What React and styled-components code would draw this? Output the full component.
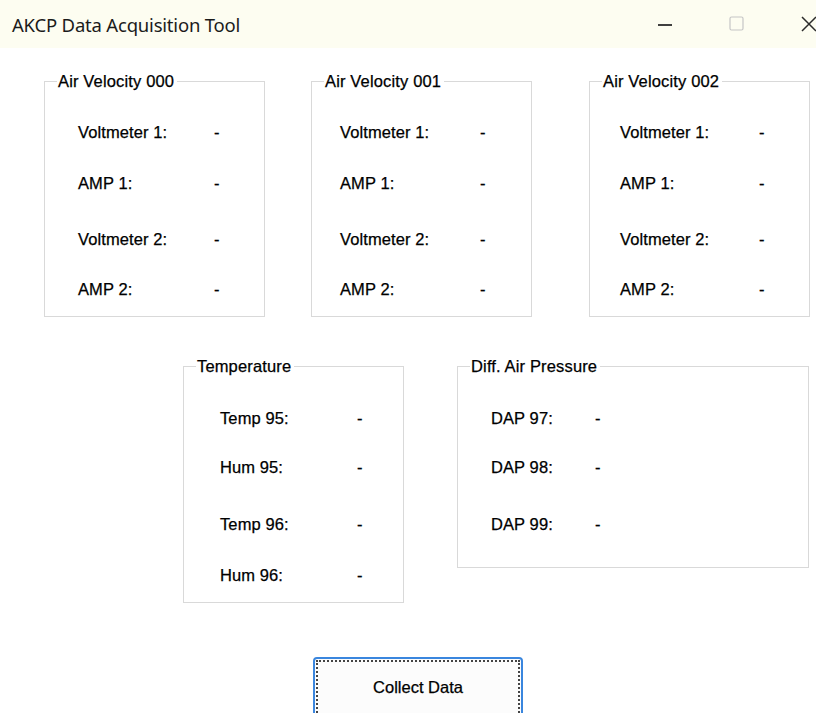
import React from 'react';
import styled, { createGlobalStyle } from 'styled-components';

const GlobalStyle = createGlobalStyle`
    html, body {
        margin: 0;
        padding: 0;
        background: #fff;
    }
    body {
        width: 816px;
        height: 713px;
        overflow: hidden;
    }
`;

const StyledWindow = styled.div`
    width: 816px;
    height: 713px;
    overflow: hidden;
    background: #fff;
    font-family: "Liberation Sans", Arial, sans-serif;
    color: #000;
`;
const StyledTitleBar = styled.div`
    display: flex;
    align-items: center;
    justify-content: space-between;
    height: 48px;
    padding-left: 12px;
    background: #fdfdf1;
`;
const StyledTitle = styled.span`
    font-family: "Noto Sans", "Open Sans", sans-serif;
    font-size: 18.5px;
    letter-spacing: -0.2px;
    color: #1b1b1b;
    margin-top: 1px;
`;
const StyledControls = styled.div`
    display: flex;
    align-items: center;
    height: 100%;
`;
const StyledControl = styled.div`
    display: flex;
    align-items: center;
    justify-content: center;
    width: 72px;
    height: 100%;
    margin-right: ${props => props.$edge ? '-29px' : '0'};
`;
const StyledBody = styled.div`
    display: flex;
    flex-direction: column;
`;
const StyledGroupRow = styled.div`
    display: flex;
    align-items: flex-start;
    margin-top: ${props => props.$top}px;
`;
const StyledGroup = styled.fieldset`
    box-sizing: border-box;
    width: ${props => props.$width}px;
    margin: 0 0 0 ${props => props.$left}px;
    padding: 0 0 ${props => props.$bottom}px ${props => props.$inset}px;
    border: 1px solid #d9d9d9;
    min-width: 0;
`;
const StyledLegend = styled.legend`
    margin-left: ${props => props.$shift}px;
    padding: 0 3px 0 1px;
    font-size: 16.5px;
    line-height: 18px;
    letter-spacing: 0.15px;
    -webkit-text-stroke: 0.25px #000;
`;
const StyledRow = styled.div`
    display: grid;
    grid-template-columns: ${props => props.$label}px auto;
    align-items: center;
    height: 20px;
    margin-top: ${props => props.$top}px;
    font-size: 16.5px;
    letter-spacing: 0.1px;
    -webkit-text-stroke: 0.25px #000;
`;
const StyledButtonRow = styled.div`
    display: flex;
    margin-top: 54px;
    padding-left: 313px;
`;
const StyledButton = styled.button`
    box-sizing: border-box;
    width: 210px;
    height: 62px;
    padding: 1px;
    border: 2px solid #3a86de;
    border-radius: 4px;
    background: #fcfcfc;
    font-family: "Liberation Sans", Arial, sans-serif;
    font-size: 16.5px;
    color: #000;
    -webkit-text-stroke: 0.25px #000;
`;
const StyledFocus = styled.span`
    display: flex;
    align-items: center;
    justify-content: center;
    box-sizing: border-box;
    height: 100%;
    border: 2px dotted #444;
    padding-bottom: 2px;
`;

const velocityRows = [
    { label: 'Voltmeter 1:', top: 32 },
    { label: 'AMP 1:', top: 31 },
    { label: 'Voltmeter 2:', top: 36 },
    { label: 'AMP 2:', top: 30 },
];
const temperatureRows = [
    { label: 'Temp 95:', top: 33 },
    { label: 'Hum 95:', top: 29 },
    { label: 'Temp 96:', top: 37 },
    { label: 'Hum 96:', top: 31 },
];
const pressureRows = [
    { label: 'DAP 97:', top: 33 },
    { label: 'DAP 98:', top: 29 },
    { label: 'DAP 99:', top: 37 },
];

const velocityGroups = [
    { title: 'Air Velocity 000', left: 44, inset: 33, label: 136 },
    { title: 'Air Velocity 001', left: 46, inset: 28, label: 140 },
    { title: 'Air Velocity 002', left: 57, inset: 30, label: 139 },
];

function Group({ title, rows, width, left, inset, label, bottom }) {
    return (
        <StyledGroup $width={width} $left={left} $inset={inset} $bottom={bottom}>
            <StyledLegend $shift={12 - inset}>{title}</StyledLegend>
            {rows.map(row => (
                <StyledRow key={row.label} $top={row.top} $label={label}>
                    <span>{row.label}</span>
                    <span>-</span>
                </StyledRow>
            ))}
        </StyledGroup>
    );
}

export default function App() {
    return (
        <StyledWindow>
            <GlobalStyle />
            <StyledTitleBar>
                <StyledTitle>AKCP Data Acquisition Tool</StyledTitle>
                <StyledControls>
                    <StyledControl>
                        <svg width="16" height="16" viewBox="0 0 16 16">
                            <path d="M1 9h14" stroke="#2b2b2b" strokeWidth="1.8" />
                        </svg>
                    </StyledControl>
                    <StyledControl>
                        <svg width="16" height="16" viewBox="0 0 16 16">
                            <rect x="1" y="1" width="13" height="13" rx="1.5" fill="none" stroke="#c6c6c6" strokeWidth="1.2" />
                        </svg>
                    </StyledControl>
                    <StyledControl $edge>
                        <svg width="16" height="16" viewBox="0 0 16 16">
                            <path d="M1 1l14 14M15 1L1 15" stroke="#2b2b2b" strokeWidth="1.5" />
                        </svg>
                    </StyledControl>
                </StyledControls>
            </StyledTitleBar>
            <StyledBody>
                <StyledGroupRow $top={24}>
                    {velocityGroups.map(group => (
                        <Group key={group.title} {...group} rows={velocityRows} width={221} bottom={17} />
                    ))}
                </StyledGroupRow>
                <StyledGroupRow $top={40}>
                    <Group title="Temperature" rows={temperatureRows} width={221} left={183} inset={36} label={137} bottom={17} />
                    <Group title="Diff. Air Pressure" rows={pressureRows} width={352} left={53} inset={33} label={104} bottom={33} />
                </StyledGroupRow>
                <StyledButtonRow>
                    <StyledButton>
                        <StyledFocus>Collect Data</StyledFocus>
                    </StyledButton>
                </StyledButtonRow>
            </StyledBody>
        </StyledWindow>
    );
}
